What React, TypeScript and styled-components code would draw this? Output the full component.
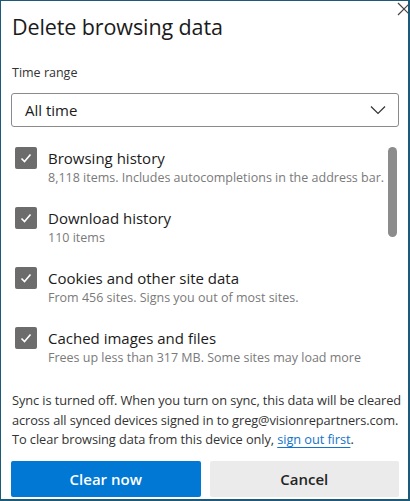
import styled, { createGlobalStyle } from 'styled-components'

const GlobalStyle = createGlobalStyle`
  html, body {
    margin: 0;
    padding: 0;
    background: #ffffff;
  }
  * {
    box-sizing: border-box;
  }
`

const Dialog = styled.div`
  position: relative;
  width: 410px;
  height: 501px;
  overflow: hidden;
  background: #ffffff;
  border-style: solid;
  border-color: #1d5a7a;
  border-width: 1px 2px 2px 1px;
  font-family: 'Open Sans', 'Noto Sans', sans-serif;
  color: #1b1b1b;
  display: flex;
  flex-direction: column;
`

const CloseButton = styled.div`
  position: absolute;
  top: -1px;
  right: -3px;
  width: 14px;
  height: 16px;
`

const Title = styled.h1`
  margin: 12px 0 0 11px;
  font-size: 21.5px;
  font-weight: 400;
  line-height: 28px;
  letter-spacing: -0.1px;
`

const FieldLabel = styled.div`
  margin: 23px 0 0 11px;
  font-size: 12.5px;
  line-height: 18px;
  color: #333;
`

const Select = styled.div`
  margin: 11px 9px 0 10px;
  height: 34px;
  border: 1px solid #8a8a8a;
  border-radius: 3px;
  display: flex;
  align-items: center;
  justify-content: space-between;
  padding: 0 12px 0 13px;
  font-size: 15px;
  color: #1b1b1b;
`

const ListArea = styled.div`
  margin-top: 20px;
  height: 227px;
  display: flex;
  overflow: hidden;
`

const List = styled.div`
  flex: 1;
  display: flex;
  flex-direction: column;
  gap: 20px;
  padding-left: 14px;
`

const Track = styled.div`
  width: 21px;
  padding: 0 11px 0 1px;
`

const Thumb = styled.div`
  width: 9px;
  height: 90px;
  border-radius: 5px;
  background: #8c8c8c;
`

const Item = styled.div`
  display: flex;
  gap: 11px;
  align-items: flex-start;
`

const Box = styled.div`
  flex: none;
  width: 22px;
  height: 22px;
  border-radius: 2px;
  background: #6c6c6c;
  display: flex;
  align-items: center;
  justify-content: center;
`

const ItemText = styled.div`
  display: flex;
  flex-direction: column;
  padding-top: 1px;
`

const ItemTitle = styled.div`
  font-size: 15px;
  line-height: 21px;
  color: #1b1b1b;
`

const ItemDesc = styled.div`
  font-size: 12.5px;
  line-height: 18px;
  color: #7a7a7a;
  white-space: nowrap;
`

const SyncNote = styled.p`
  margin: 17px 0 0 11px;
  font-size: 12.8px;
  line-height: 19.5px;
  color: #333;
  letter-spacing: -0.08px;
`

const Link = styled.a`
  color: #1373c9;
  text-decoration: underline;
  text-underline-offset: 3px;
`

const Buttons = styled.div`
  margin: auto 9px 2px 10px;
  display: grid;
  grid-template-columns: 1fr 1fr;
  gap: 9px;
`

const Button = styled.button<{ $primary?: boolean }>`
  height: 36px;
  border: none;
  border-radius: 2px;
  font-family: inherit;
  font-size: 15px;
  font-weight: 600;
  background: ${(p) => (p.$primary ? '#0078d4' : '#ebebeb')};
  color: ${(p) => (p.$primary ? '#ffffff' : '#242424')};
  cursor: pointer;
`

const items = [
  { title: 'Browsing history', desc: '8,118 items. Includes autocompletions in the address bar.' },
  { title: 'Download history', desc: '110 items' },
  { title: 'Cookies and other site data', desc: 'From 456 sites. Signs you out of most sites.' },
  { title: 'Cached images and files', desc: 'Frees up less than 317 MB. Some sites may load more' },
]

const Check = () => (
  <svg width="14" height="14" viewBox="0 0 14 14">
    <path d="M2.5 7.5 L5.5 10.5 L11.5 3.5" stroke="#fff" strokeWidth="1.6" fill="none" />
  </svg>
)

const App = () => {
  return (
    <>
      <GlobalStyle />
      <Dialog>
        <CloseButton>
          <svg width="14" height="16" viewBox="0 0 14 16">
            <path d="M1 2 L13 14 M13 2 L1 14" stroke="#444" strokeWidth="1.2" />
          </svg>
        </CloseButton>
        <Title>Delete browsing data</Title>
        <FieldLabel>Time range</FieldLabel>
        <Select>
          <span>All time</span>
          <svg width="16" height="10" viewBox="0 0 16 10">
            <path d="M1 1.5 L8 8.5 L15 1.5" stroke="#333" strokeWidth="1.2" fill="none" />
          </svg>
        </Select>
        <ListArea>
          <List>
            {items.map((it) => (
              <Item key={it.title}>
                <Box>
                  <Check />
                </Box>
                <ItemText>
                  <ItemTitle>{it.title}</ItemTitle>
                  <ItemDesc>{it.desc}</ItemDesc>
                </ItemText>
              </Item>
            ))}
          </List>
          <Track>
            <Thumb />
          </Track>
        </ListArea>
        <SyncNote>
          Sync is turned off. When you turn on sync, this data will be cleared across all synced
          devices signed in to greg@visionrepartners.com. To clear browsing data from this device
          only, <Link>sign out first</Link>.
        </SyncNote>
        <Buttons>
          <Button $primary>Clear now</Button>
          <Button>Cancel</Button>
        </Buttons>
      </Dialog>
    </>
  )
}

export default App
